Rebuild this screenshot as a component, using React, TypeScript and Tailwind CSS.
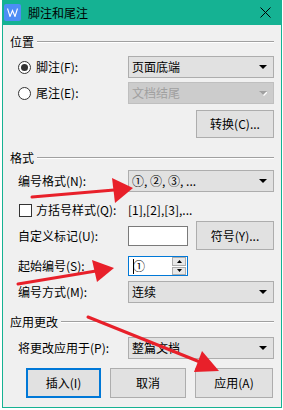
import React from "react"

const font = { fontFamily: '"Noto Sans CJK SC", "Noto Sans", sans-serif' }

function Arrow({ disabled }: { disabled?: boolean }) {
  return (
    <svg width="8" height="5" viewBox="0 0 8 5">
      {disabled && <polygon points="1,1 9,1 5,5" fill="#ffffff" />}
      <polygon points="0,0 8,0 4,4" fill={disabled ? "#a0a0a0" : "#000000"} />
    </svg>
  )
}

function Select({ value, disabled }: { value: string; disabled?: boolean }) {
  return (
    <div
      className={
        disabled
          ? "flex-1 h-[22px] flex items-center justify-between border border-[#bfbfbf] bg-[#cccccc] pl-[3px] pr-[6px] text-[#a0a0a0]"
          : "flex-1 h-[22px] flex items-center justify-between border border-[#adadad] bg-[#e1e1e1] pl-[3px] pr-[6px] text-black"
      }
    >
      <span>{value}</span>
      <Arrow disabled={disabled} />
    </div>
  )
}

function Radio({ checked }: { checked?: boolean }) {
  return (
    <span className="w-[13px] h-[13px] rounded-full border border-[#333333] bg-white flex items-center justify-center">
      {checked && <span className="w-[7px] h-[7px] rounded-full bg-[#333333]" />}
    </span>
  )
}

function Header({ label }: { label: string }) {
  return (
    <div className="h-[14px] flex items-center gap-[3px]">
      <span>{label}</span>
      <div className="flex-1 border-t border-[#a0a0a0] border-b border-b-white" />
    </div>
  )
}

function Button({ label, w, primary }: { label: string; w: string; primary?: boolean }) {
  return (
    <div
      className={
        (primary ? "border-2 border-[#0078d7] " : "border border-[#adadad] ") +
        "h-full bg-[#e1e1e1] flex items-center justify-center " +
        w
      }
    >
      {label}
    </div>
  )
}

export default function App() {
  return (
    <div className="relative w-[283px] h-[410px] bg-white overflow-hidden text-[12px] leading-[14px] text-black" style={font}>
      <div className="ml-[2px] w-[280px] h-[408px] flex flex-col border border-t-0 border-[#15b293] bg-[#f0f0f0]">
        {/* title bar */}
        <div className="h-[25px] shrink-0 bg-[#15b293] flex items-center pl-[2px] pr-[11px] -mx-px">
          <div className="w-[17px] h-[17px] rounded-[2px] bg-[#4d8ef5] flex items-center justify-center">
            <svg width="11" height="9" viewBox="0 0 11 9">
              <polyline points="0.5,0.5 3,8.5 5.5,2.5 8,8.5 10.5,0.5" fill="none" stroke="#ffffff" strokeWidth="1.1" />
            </svg>
          </div>
          <span className="ml-[7px] text-[12px]">脚注和尾注</span>
          <div className="flex-1" />
          <svg width="11" height="11" viewBox="0 0 11 11">
            <path d="M0.5 0.5 L10.5 10.5 M10.5 0.5 L0.5 10.5" stroke="#000000" strokeWidth="1" />
          </svg>
        </div>

        <div className="flex flex-col pl-[7px] pr-[7px]">
          <div className="mt-[10px]">
            <Header label="位置" />
          </div>
          <div className="mt-[7px] h-[22px] flex items-center pl-[8px]">
            <div className="w-[110px] flex items-center gap-[5px]">
              <Radio checked />
              <span>脚注(F):</span>
            </div>
            <Select value="页面底端" />
          </div>
          <div className="mt-[4px] h-[22px] flex items-center pl-[8px]">
            <div className="w-[110px] flex items-center gap-[5px]">
              <Radio />
              <span>尾注(E):</span>
            </div>
            <Select value="文档结尾" disabled />
          </div>
          <div className="mt-[6px] h-[28px] flex justify-end">
            <Button label="转换(C)..." w="w-[78px]" />
          </div>

          <div className="mt-[13px]">
            <Header label="格式" />
          </div>
          <div className="mt-[5px] h-[22px] flex items-center pl-[8px]">
            <div className="w-[110px]">编号格式(N):</div>
            <Select value="①, ②, ③, ..." />
          </div>
          <div className="mt-[8px] h-[20px] flex items-center pl-[9px]">
            <div className="w-[109px] flex items-center gap-[4px]">
              <span className="w-[13px] h-[13px] border border-[#333333] bg-white" />
              <span>方括号样式(Q):</span>
            </div>
            <span>[1],[2],[3],...</span>
          </div>
          <div className="mt-[1px] h-[29px] flex items-center pl-[8px]">
            <div className="w-[110px]">自定义标记(U):</div>
            <div className="w-[60px] h-[20px] border border-[#7a7a7a] bg-white" />
            <div className="flex-1" />
            <Button label="符号(Y)..." w="w-[78px]" />
          </div>
          <div className="mt-[6px] h-[20px] flex items-center pl-[8px]">
            <div className="w-[110px]">起始编号(S):</div>
            <div className="w-[60px] h-[20px] border border-[#0078d7] bg-white flex items-center pl-[4px] pr-[1px]">
              <span className="w-px h-[15px] bg-black" />
              <span className="-ml-[1px]">①</span>
              <div className="flex-1" />
              <div className="w-[14px] h-[18px] flex flex-col gap-px">
                <div className="flex-1 border border-[#adadad] bg-[#e8e8e8] flex items-center justify-center">
                  <svg width="5" height="3" viewBox="0 0 5 3"><polygon points="0,3 5,3 2.5,0" fill="#000" /></svg>
                </div>
                <div className="flex-1 border border-[#adadad] bg-[#e8e8e8] flex items-center justify-center">
                  <svg width="5" height="3" viewBox="0 0 5 3"><polygon points="0,0 5,0 2.5,3" fill="#000" /></svg>
                </div>
              </div>
            </div>
          </div>
          <div className="mt-[5px] h-[22px] flex items-center pl-[8px]">
            <div className="w-[110px]">编号方式(M):</div>
            <Select value="连续" />
          </div>

          <div className="mt-[12px]">
            <Header label="应用更改" />
          </div>
          <div className="mt-[8px] h-[22px] flex items-center pl-[8px]">
            <div className="w-[110px]">将更改应用于(P):</div>
            <Select value="整篇文档" />
          </div>
          <div className="mt-[9px] h-[30px] flex items-center pl-[16px] gap-[9px]">
            <Button label="插入(I)" w="w-[75px]" primary />
            <Button label="取消" w="w-[76px]" />
            <Button label="应用(A)" w="w-[78px]" />
          </div>
        </div>
      </div>

      {/* red annotation arrows */}
      <svg className="absolute inset-0 pointer-events-none" width="283" height="410" viewBox="0 0 283 410">
        <g stroke="#e8202a" strokeWidth="3" strokeLinecap="round" fill="#e8202a">
          <line x1="32" y1="197" x2="114" y2="190" />
          <line x1="18" y1="284" x2="96" y2="271" />
          <line x1="88" y1="317" x2="200" y2="362" />
        </g>
        <g fill="#e8202a">
          <polygon points="112,178 115,203 133,188" />
          <polygon points="92,260 97,282 114,268" />
          <polygon points="194,372 202,351 219,371" />
        </g>
      </svg>
    </div>
  )
}
